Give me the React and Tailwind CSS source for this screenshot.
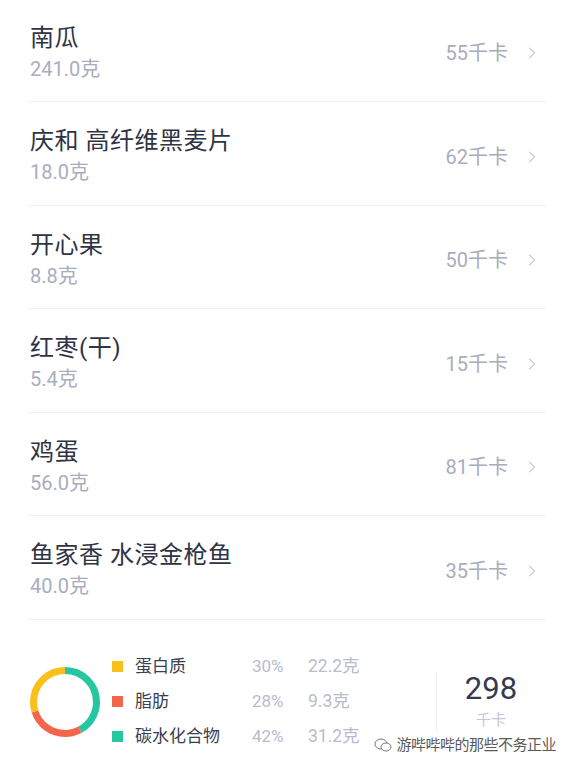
import { ChevronRight } from 'lucide-react'

const foods = [
  { name: '南瓜', weight: '241.0克', kcal: '55千卡' },
  { name: '庆和 高纤维黑麦片', weight: '18.0克', kcal: '62千卡' },
  { name: '开心果', weight: '8.8克', kcal: '50千卡' },
  { name: '红枣(干)', weight: '5.4克', kcal: '15千卡' },
  { name: '鸡蛋', weight: '56.0克', kcal: '81千卡' },
  { name: '鱼家香 水浸金枪鱼', weight: '40.0克', kcal: '35千卡' },
]

const macros = [
  { label: '蛋白质', pct: '30%', grams: '22.2克', color: 'bg-[#f9c01c]' },
  { label: '脂肪', pct: '28%', grams: '9.3克', color: 'bg-[#f4664c]' },
  { label: '碳水化合物', pct: '42%', grams: '31.2克', color: 'bg-[#25c6a0]' },
]

const C = 2 * Math.PI * 31.5

const Donut = () => {
  const segs = [
    { pct: 0.42, color: '#25c6a0' },
    { pct: 0.28, color: '#f4664c' },
    { pct: 0.3, color: '#f9c01c' },
  ]
  let offset = 0
  return (
    <svg width="70" height="70" viewBox="0 0 70 70" className="-rotate-90">
      {segs.map((s) => {
        const len = s.pct * C
        const el = (
          <circle
            key={s.color}
            cx="35"
            cy="35"
            r="31.5"
            fill="none"
            stroke={s.color}
            strokeWidth="7"
            strokeDasharray={`${len} ${C - len}`}
            strokeDashoffset={-offset}
          />
        )
        offset += len
        return el
      })}
    </svg>
  )
}

const App = () => {
  return (
    <main className="relative h-[771px] w-[574px] overflow-hidden bg-white font-['Roboto','Noto_Sans_CJK_SC',sans-serif]">
      <ul className="-mt-[1.5px] px-[28px]">
        {foods.map((food) => (
          <li
            key={food.name}
            className="flex items-center justify-between border-b border-[#eef0f4] pb-[19.5px] pl-[2px] pr-[4px] pt-[24px]"
          >
            <div className="flex flex-col">
              <span className="text-[24px] leading-[30px] tracking-[0.5px] text-[#2f3344]">{food.name}</span>
              <span className="mt-[3px] text-[20px] leading-[26px] text-[#a9adbd]">{food.weight}</span>
            </div>
            <div className="flex items-center gap-[14px] pt-[2px]">
              <span className="text-[20px] text-[#a9adbb]">{food.kcal}</span>
              <ChevronRight size={20} strokeWidth={1.3} className="text-[#c9ccd6]" />
            </div>
          </li>
        ))}
      </ul>

      <section className="flex items-center pl-[30px] pt-[36px]">
        <Donut />
        <div className="ml-[12px] flex flex-col gap-[13px]">
          {macros.map((m) => (
            <div key={m.label} className="flex h-[22px] items-center">
              <span className={`h-[11px] w-[11px] ${m.color}`} />
              <span className="ml-[12px] w-[117px] text-[17px] text-[#3a3e50]">{m.label}</span>
              <span className="w-[56px] text-[17px] text-[#b9bcca]">{m.pct}</span>
              <span className="text-[17.5px] text-[#b9bcca]">{m.grams}</span>
            </div>
          ))}
        </div>
        <div className="ml-auto mr-[57px] flex items-center">
          <div className="h-[60px] w-px bg-[#f0f1f5]" />
          <div className="ml-[28px] flex w-[52px] flex-col items-center">
            <span className="text-[31px] leading-[36px] text-[#353a4f]">298</span>
            <span className="mt-[2px] text-[15px] text-[#c4c7d8]">千卡</span>
          </div>
        </div>
      </section>

      <div className="absolute bottom-[15px] right-[18px] flex items-center gap-[4px] text-[#5a5a5a] [text-shadow:0_0_2px_#fff,0_0_2px_#fff]">
        <svg width="18" height="16" viewBox="0 0 18 16" fill="none" stroke="#777" strokeWidth="1">
          <ellipse cx="7" cy="7" rx="6" ry="5" />
          <ellipse cx="12" cy="10" rx="5" ry="4" fill="#fff" />
        </svg>
        <span className="text-[15px] tracking-[-0.5px]">游哔哔哔的那些不务正业</span>
      </div>
    </main>
  )
}

export default App
